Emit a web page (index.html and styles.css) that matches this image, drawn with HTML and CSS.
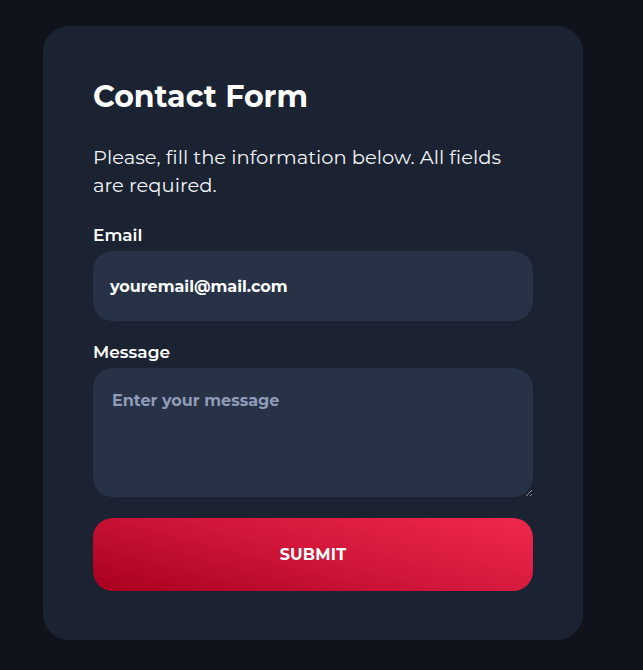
FILE: index.html
```html
<!DOCTYPE html>
<html lang="en">
<head>
    <meta charset="UTF-8">
    <meta name="viewport" content="width=device-width, initial-scale=1.0">
    <title>Contact Form</title>
    <link rel="stylesheet" href="styles.css">
</head>
<body>
    <div class="card">
        <h1>Contact Form</h1>
        <p class="intro">Please, fill the information below. All fields are required.</p>
        <form class="contact-form" onsubmit="return false">
            <label class="field">
                <span class="field-label">Email</span>
                <input type="email" class="input" value="youremail@mail.com">
            </label>
            <label class="field">
                <span class="field-label">Message</span>
                <textarea class="input textarea" placeholder="Enter your message"></textarea>
            </label>
            <button type="submit" class="submit-btn">SUBMIT</button>
        </form>
    </div>
</body>
</html>
```

FILE: styles.css
```css
* {
    box-sizing: border-box;
}

body {
    font-family: 'Montserrat', 'DejaVu Sans', sans-serif;
    background: #10131b;
    margin: 0;
    padding: 26px 0 0 43px;
    min-height: 100vh;
}

.card {
    width: 540px;
    background: #1b2231;
    border-radius: 26px;
    padding: 50px 50px 49px;
    color: #fff;
}

h1 {
    font-size: 30px;
    font-weight: 700;
    margin: 3px 0 0;
    line-height: 36px;
}

.intro {
    font-size: 19.5px;
    line-height: 28px;
    margin: 28px 0 0;
    color: #f2f4f8;
}

.contact-form {
    margin-top: 25px;
    display: flex;
    flex-direction: column;
}

.field {
    display: flex;
    flex-direction: column;
    margin-bottom: 20px;
}

.field + .field {
    margin-bottom: 21px;
}

.field-label {
    font-size: 17px;
    font-weight: 600;
    line-height: 22px;
    margin-bottom: 5px;
}

.input {
    font-family: inherit;
    font-size: 16px;
    font-weight: 700;
    color: #fff;
    background: #273246;
    border: none;
    border-radius: 20px;
    height: 70px;
    padding: 0 17px;
    outline: none;
}

.textarea {
    height: 129px;
    padding: 23px 19px 20px;
    resize: vertical;
}

.textarea::placeholder {
    color: #8f9cb8;
}

.submit-btn {
    font-family: inherit;
    font-size: 16px;
    font-weight: 700;
    letter-spacing: 0.2px;
    color: #fff;
    height: 73px;
    border: none;
    border-radius: 20px;
    background: linear-gradient(15deg, #a8001f 0%, #d0163a 50%, #f0284e 100%);
    cursor: pointer;
}
```
